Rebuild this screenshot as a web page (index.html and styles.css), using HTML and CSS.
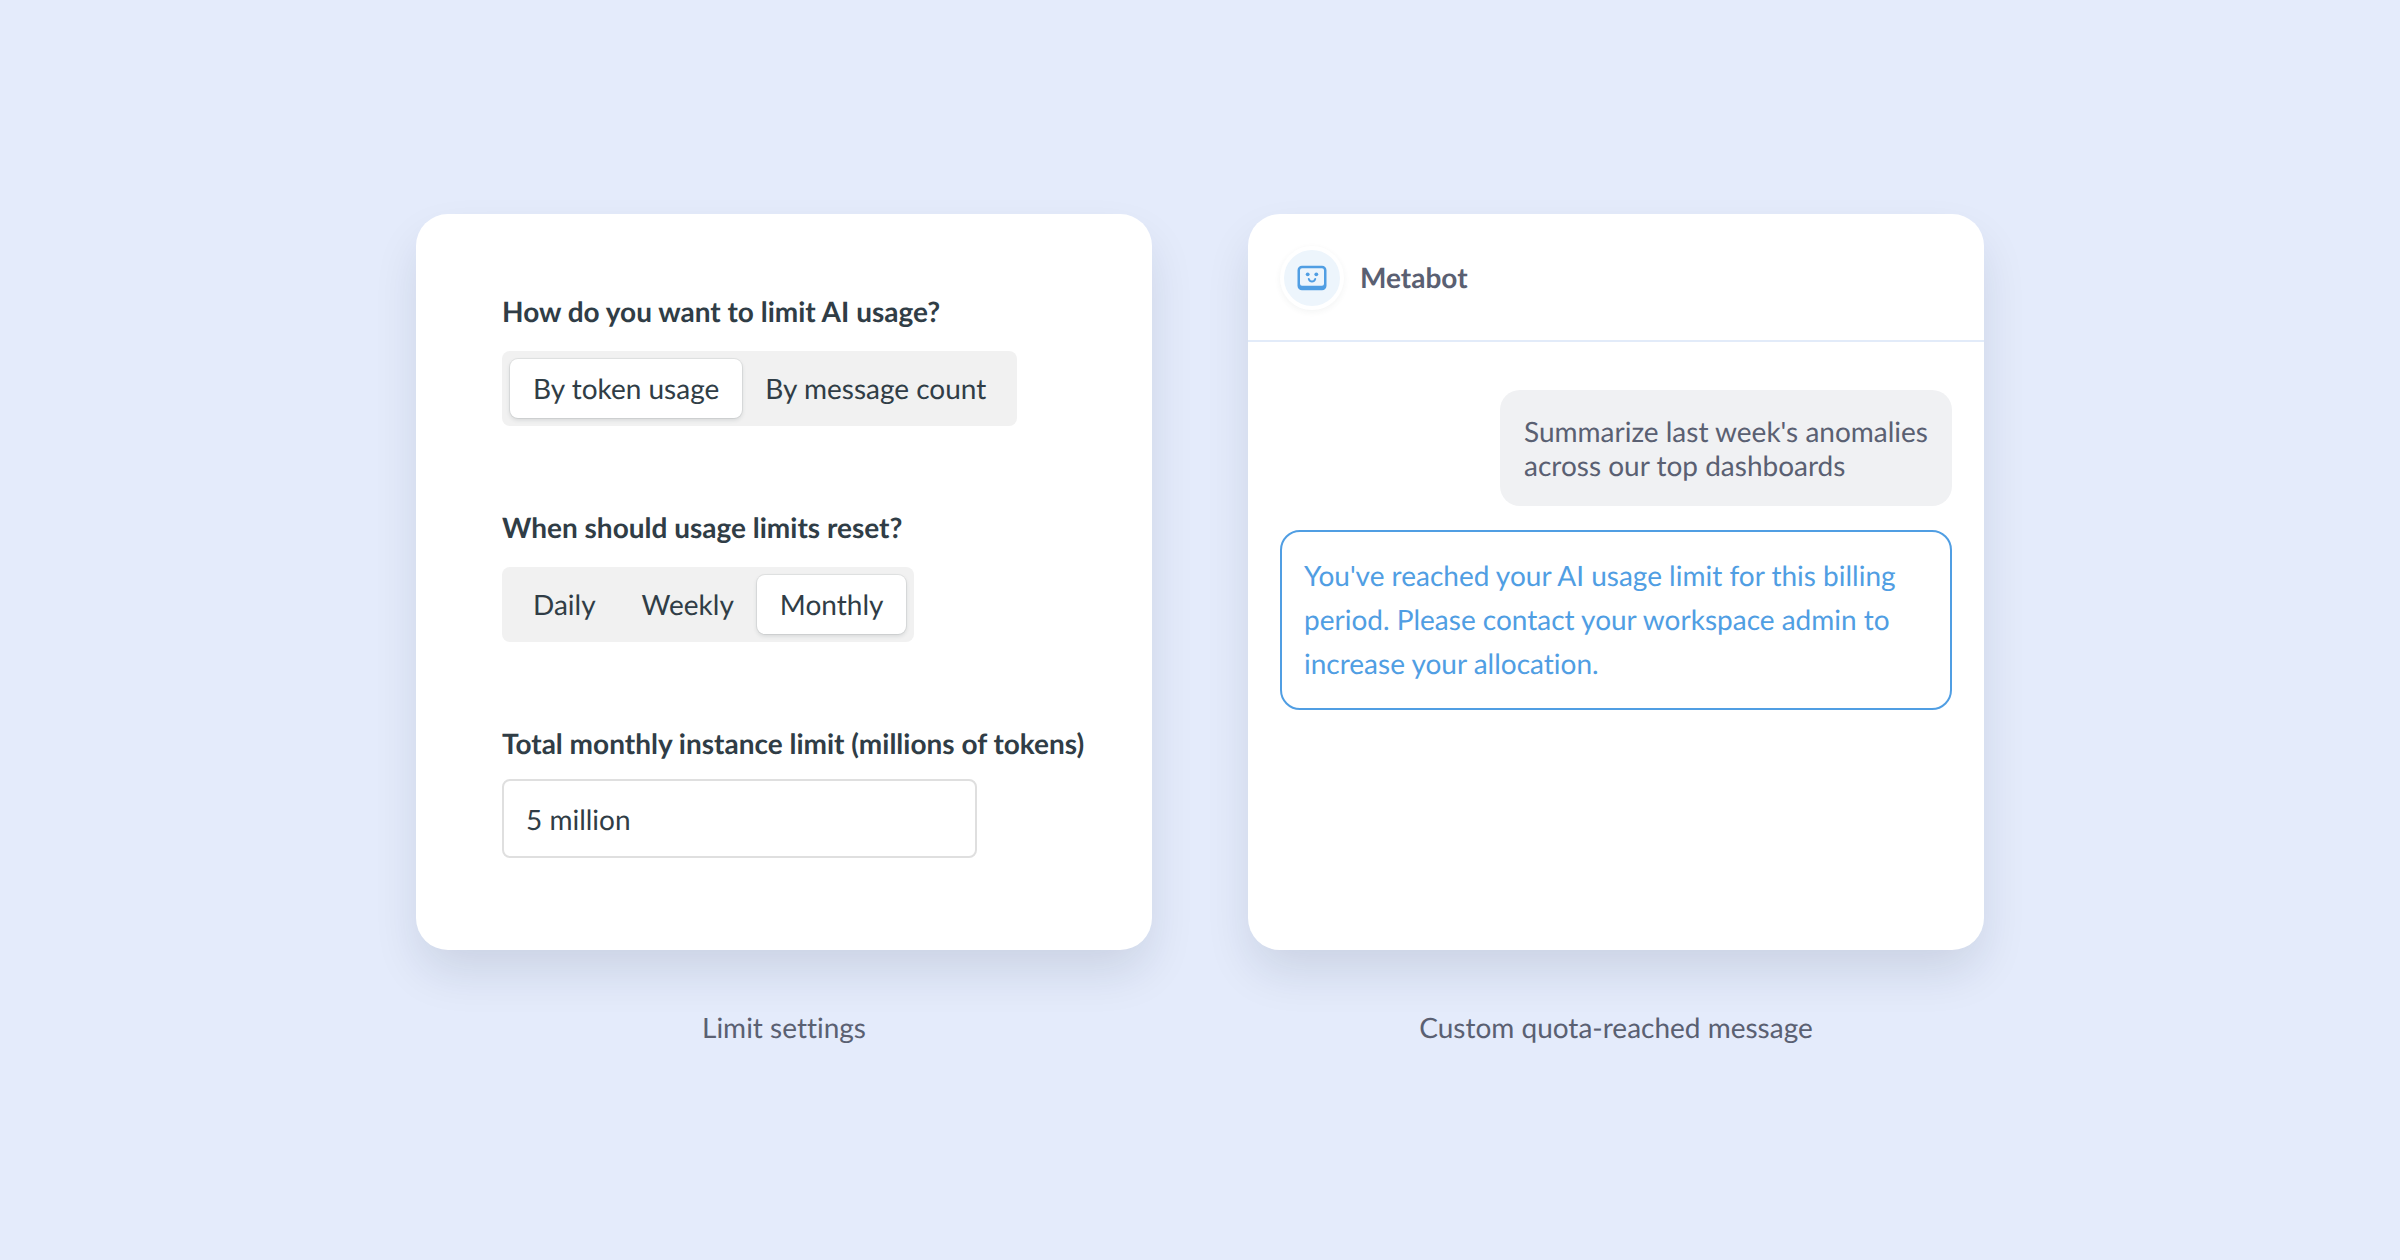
FILE: index.html
```
<!DOCTYPE html>
<html lang="en">
<head>
    <meta charset="UTF-8">
    <meta name="viewport" content="width=device-width, initial-scale=1.0">
    <title>AI usage limits</title>
    <link rel="stylesheet" href="styles.css">
</head>

<body>
    <main class="showcase">
        <figure class="panel">
            <form class="card settings">
                <fieldset class="field">
                    <legend class="field-title">How do you want to limit AI usage?</legend>
                    <div class="segmented">
                        <label class="segment"><input type="radio" name="limit-by" value="tokens" checked>By token usage</label>
                        <label class="segment"><input type="radio" name="limit-by" value="messages">By message count</label>
                    </div>
                </fieldset>
                <fieldset class="field">
                    <legend class="field-title">When should usage limits reset?</legend>
                    <div class="segmented">
                        <label class="segment"><input type="radio" name="reset" value="daily">Daily</label>
                        <label class="segment"><input type="radio" name="reset" value="weekly">Weekly</label>
                        <label class="segment"><input type="radio" name="reset" value="monthly" checked>Monthly</label>
                    </div>
                </fieldset>
                <div class="field">
                    <label class="field-title" for="total-limit">Total monthly instance limit (millions of tokens)</label>
                    <input class="text-input" id="total-limit" type="text" value="5 million">
                </div>
            </form>
            <figcaption class="caption">Limit settings</figcaption>
        </figure>

        <figure class="panel">
            <section class="card chat">
                <header class="chat-header">
                    <span class="avatar">
                        <svg class="bot-icon" viewBox="0 0 30 26" aria-hidden="true">
                            <path fill="currentColor" fill-rule="evenodd" d="M5 .8h20a4.500 4.500 0 0 1 4.500 4.500v15.500a4.500 4.500 0 0 1-4.500 4.500H5a4.500 4.500 0 0 1-4.500-4.500V5.300A4.500 4.500 0 0 1 5 .8zM5 3.300a2 2 0 0 0-2 2v13.500a2 2 0 0 0 2 2h20a2 2 0 0 0 2-2V5.300a2 2 0 0 0-2-2z"/>
                            <circle fill="currentColor" cx="10.700" cy="9.300" r="1.900"/>
                            <circle fill="currentColor" cx="19.300" cy="9.300" r="1.900"/>
                            <path fill="none" stroke="currentColor" stroke-width="2" stroke-linecap="round" d="M11.800 14c.6 1.700 1.800 2.500 3.200 2.500s2.600-.8 3.200-2.500"/>
                        </svg>
                    </span>
                    <h2 class="chat-name">Metabot</h2>
                </header>
                <div class="messages">
                    <p class="message question">Summarize last week's anomalies across our top dashboards</p>
                    <p class="message notice">You've reached your AI usage limit for this billing period. Please contact your workspace admin to increase your allocation.</p>
                </div>
            </section>
            <figcaption class="caption">Custom quota-reached message</figcaption>
        </figure>
    </main>
</body>
</html>
```
FILE: styles.css
```
* {
    margin: 0;
    padding: 0;
    box-sizing: border-box;
}

body {
    background: #e4ebfb;
    color: #303d46;
    font-family: Lato, "Open Sans", sans-serif;
    font-size: 28px;
    font-variant-ligatures: none;
    line-height: 34px;
    text-rendering: geometricPrecision;
}

.showcase {
    min-height: 100vh;
    display: flex;
    flex-wrap: wrap;
    align-items: center;
    align-content: center;
    justify-content: center;
    gap: 96px;
}

.panel {
    flex: 0 1 736px;
    display: flex;
    flex-direction: column;
    gap: 60px;
}

.card {
    min-height: 736px;
    background: #fff;
    border-radius: 32px;
    box-shadow: 0 24px 48px -4px rgba(20, 30, 60, 0.12);
}

.caption {
    padding-bottom: 2px;
    color: #5a6072;
    text-align: center;
}

/* limit settings */
.settings {
    display: flex;
    flex-direction: column;
    gap: 83px;
    padding: 79px 60px 80px 86px;
}

.field {
    border: 0;
}

.field-title {
    display: block;
    font-weight: bold;
    line-height: 36px;
}

.segmented {
    display: inline-flex;
    vertical-align: top;
    margin-top: 22px;
    padding: 8px;
    background: #f1f1f1;
    border-radius: 8px;
}

.segment {
    padding: 12px 23px 13px;
    border-radius: 8px;
    cursor: pointer;
}

.segment input {
    appearance: none;
    width: 0;
    height: 0;
    vertical-align: top;
}

.segment:has(input:checked) {
    background: #fff;
    box-shadow: 0 0 0 1px rgba(48, 61, 70, 0.08), 0 2px 4px rgba(48, 61, 70, 0.15);
}

.text-input {
    display: block;
    width: 100%;
    max-width: 475px;
    height: 79px;
    margin-top: 18px;
    padding: 0 22px;
    border: 2px solid #dfdfdf;
    border-radius: 8px;
    background: #fff;
    color: inherit;
    font: inherit;
    text-rendering: inherit;
}

/* chat */
.chat-header {
    display: flex;
    align-items: center;
    gap: 16px;
    padding: 32px 32px 30px;
    border-bottom: 2px solid #e2ebf9;
}

.avatar {
    display: flex;
    align-items: center;
    justify-content: center;
    width: 64px;
    height: 64px;
    border: 4px solid #fff;
    border-radius: 50%;
    background: #edf5fc;
    box-shadow: 0 2px 6px rgba(48, 61, 70, 0.06);
    color: #509ee3;
}

.bot-icon {
    width: 30px;
    height: 26px;
}

.chat-name {
    padding-bottom: 2px;
    color: #5a6072;
    font-size: 28px;
}

.messages {
    display: flex;
    flex-direction: column;
    gap: 24px;
    padding: 48px 32px;
}

.message {
    border-radius: 20px;
}

.question {
    align-self: flex-end;
    max-width: 452px;
    padding: 24px;
    background: #f0f1f3;
    color: #5a6072;
}

.notice {
    padding: 21px 22px 23px;
    border: 2px solid #509ee3;
    color: #509ee3;
    line-height: 44px;
}
```
